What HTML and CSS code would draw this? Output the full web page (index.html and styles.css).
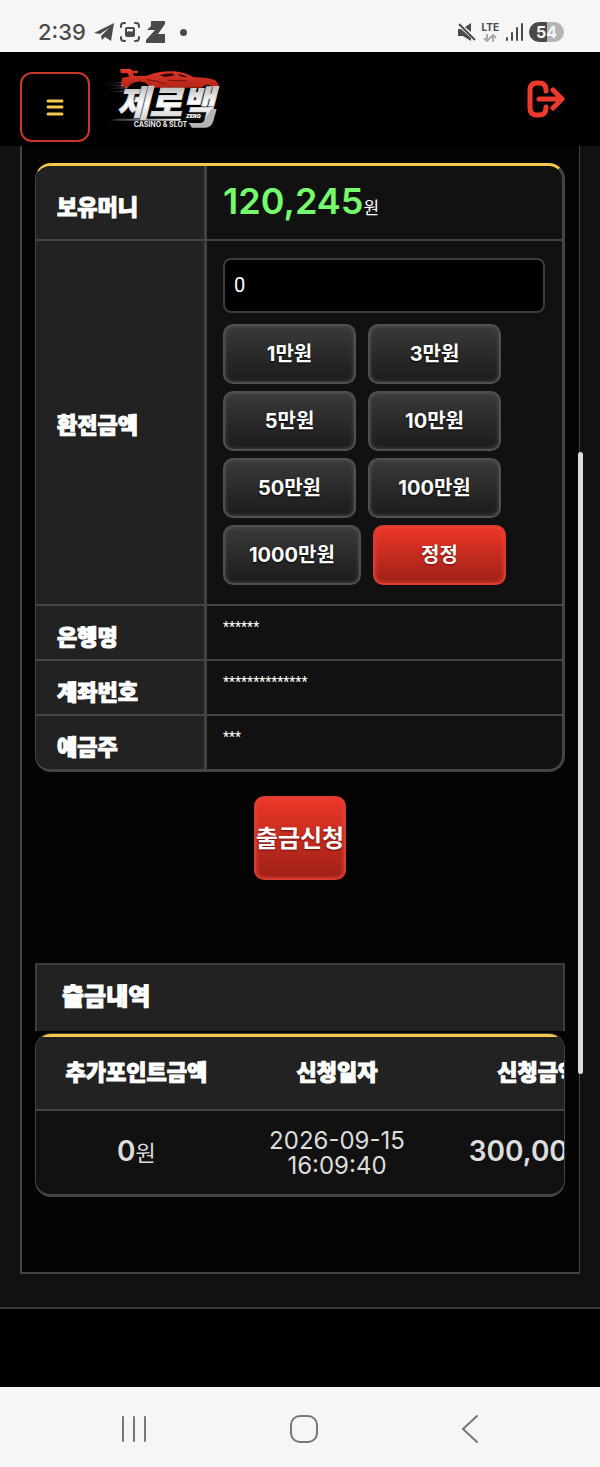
FILE: index.html
```html
<!DOCTYPE html>
<html lang="ko">
<head>
  <meta charset="UTF-8">
  <meta name="viewport" content="width=device-width, initial-scale=1">
  <title>제로백 - 출금신청</title>
  <link rel="stylesheet" href="styles.css">
</head>
<body>

  <div class="status-bar">
    <div class="status-left">
      <span class="clock">2:39</span>
      <svg width="20" height="20" viewBox="0 0 20 20"><path d="M0 11 L20 1 L17 19 L11 15 L8 18 L7 14 L15 6 L6 12 Z" fill="#4a4a4a"/></svg>
      <svg width="20" height="20" viewBox="0 0 20 20" fill="none" stroke="#4a4a4a" stroke-width="2" stroke-linecap="round"><path d="M1 5V4a3 3 0 0 1 3-3h1M15 1h1a3 3 0 0 1 3 3v1M19 15v1a3 3 0 0 1-3 3h-1M5 19H4a3 3 0 0 1-3-3v-1"/><rect x="6" y="6" width="8" height="8" rx="1"/><path d="M7 13v-2l2-1 2 1 2-1v3z" fill="#4a4a4a"/></svg>
      <svg width="20" height="22" viewBox="0 0 20 22"><path d="M5 0H19V3L12 13H19V22H0V19L9 9H1L5 5Z" fill="#4a4a4a"/></svg>
      <span class="dot"></span>
    </div>
    <div class="status-right">
      <svg width="18" height="18" viewBox="0 0 18 18"><path d="M0 6H3L13 15V18L5 13H0ZM7 4L13 0V9Z" fill="#4a4a4a"/><path d="M1 1L17 17" stroke="#4a4a4a" stroke-width="2"/></svg>
      <span class="lte">LTE
        <svg width="14" height="8" viewBox="0 0 14 8" fill="none" stroke="#aaa" stroke-width="2"><path d="M4 0v7M1 4l3 3 3-3M10 8V1M7 4l3-3 3 3"/></svg>
      </span>
      <svg width="18" height="20" viewBox="0 0 18 20" stroke="#4a4a4a" stroke-width="2" stroke-linecap="round"><path d="M2 16v2M7 11v7M12 6v12M17 2v16"/></svg>
      <span class="battery">54</span>
    </div>
  </div>

  <header class="top-bar">
    <button class="menu-btn" aria-label="메뉴">
      <svg width="18" height="17" viewBox="0 0 18 17" stroke="#f2c94c" stroke-width="3" stroke-linecap="round"><path d="M2 2H16M2 8H16M2 15H16"/></svg>
    </button>
    <a href="#" class="logo" aria-label="제로백">
      <svg width="130" height="80" viewBox="0 0 390 240">
        <defs>
          <linearGradient id="silver" x1="0" y1="0" x2="0" y2="1">
            <stop offset="0" stop-color="#a8a8a8"/>
            <stop offset="0.5" stop-color="#ffffff"/>
            <stop offset="1" stop-color="#c4c4c4"/>
          </linearGradient>
          <linearGradient id="streak" x1="0" y1="0" x2="1" y2="0">
            <stop offset="0" stop-color="#fff" stop-opacity="0"/>
            <stop offset="1" stop-color="#fff"/>
          </linearGradient>
          <linearGradient id="car" x1="0" y1="0" x2="0" y2="1">
            <stop offset="0" stop-color="#e43a2b"/>
            <stop offset="1" stop-color="#b32417"/>
          </linearGradient>
        </defs>
        <path d="M60 30L92 29L96 35L114 35L113 43L98 43L103 51L140 50Q178 36 218 37Q252 38 282 55Q322 54 346 64L357 78L350 86L336 86Q327 68 304 86L150 86Q138 64 112 68Q92 71 84 86L63 82L66 57L88 52L83 43L63 43Z" fill="url(#car)"/>
        <path d="M178 49Q196 43 216 43L224 49L196 54ZM232 44Q250 46 264 54L244 53Z" fill="#2b0805"/>
        <path d="M140 62L176 68L200 76M206 64L262 66" fill="none" stroke="#6e140d" stroke-width="3"/>
        <path d="M14 74L66 69V73ZM0 80L68 78V82ZM20 88L82 84V89ZM30 98L76 94V98ZM22 184L54 179H244L240 185H50Z" fill="url(#streak)"/>
        <text x="50" y="170" class="logo-name" fill="url(#silver)">제로백</text>
        <path d="M334 150H350L340 186Q334 206 316 206H276L266 192H298Q310 192 314 182Z" fill="#b4b4b4"/>
        <path d="M257 163H316L309 182H250Z" fill="#151515"/>
        <text x="258" y="178" class="logo-zero">ZERO</text>
        <text x="101" y="205" class="logo-sub">CASINO &amp; SLOT</text>
      </svg>
    </a>
    <a href="#" class="logout" aria-label="로그아웃">
      <svg width="38" height="38" viewBox="0 0 38 38" fill="none" stroke="#ee3a2d" stroke-width="5" stroke-linecap="round" stroke-linejoin="round"><path d="M19 11V10Q19 3 12 3H10Q3 3 3 10V28Q3 35 10 35H12Q19 35 19 28V27M12 19H34M26 10L35 19L26 28"/></svg>
    </a>
  </header>

  <main class="page">
    <div class="panel">

      <form>
        <div class="box money-box">
          <table class="money-table">
            <tr class="balance-row">
              <th>보유머니</th>
              <td><span class="balance">120,245</span><span class="won">원</span></td>
            </tr>
            <tr class="amount-row">
              <th><label for="amount">환전금액</label></th>
              <td>
                <input type="text" id="amount" value="0">
                <div class="amount-btns">
                  <button type="button" class="btn">1만원</button>
                  <button type="button" class="btn">3만원</button>
                  <button type="button" class="btn">5만원</button>
                  <button type="button" class="btn">10만원</button>
                  <button type="button" class="btn">50만원</button>
                  <button type="button" class="btn">100만원</button>
                  <button type="button" class="btn">1000만원</button>
                  <button type="button" class="btn red">정정</button>
                </div>
              </td>
            </tr>
            <tr class="info-row"><th>은행명</th><td>******</td></tr>
            <tr class="info-row"><th>계좌번호</th><td>**************</td></tr>
            <tr class="info-row"><th>예금주</th><td>***</td></tr>
          </table>
        </div>

        <button type="button" class="btn red submit">출금신청</button>
      </form>

      <h2>출금내역</h2>
      <div class="box history-box">
        <table class="history-table">
          <thead>
            <tr><th>추가포인트금액</th><th>신청일자</th><th>신청금액</th></tr>
          </thead>
          <tbody>
            <tr>
              <td><b>0</b>원</td>
              <td class="date">2026-09-15<br>16:09:40</td>
              <td><b>300,000</b>원</td>
            </tr>
          </tbody>
        </table>
      </div>

    </div>
    <span class="scroll-thumb"></span>
  </main>

  <footer class="footer"></footer>

  <nav class="phone-nav">
    <button aria-label="최근 앱"><svg width="26" height="28" viewBox="0 0 26 28" stroke="#777" stroke-width="2" stroke-linecap="round"><path d="M2 2V26M13 2V26M24 2V26"/></svg></button>
    <button aria-label="홈"><svg width="28" height="28" viewBox="0 0 28 28" fill="none" stroke="#777" stroke-width="2"><rect x="1" y="1" width="26" height="26" rx="9"/></svg></button>
    <button aria-label="뒤로"><svg width="18" height="28" viewBox="0 0 18 28" fill="none" stroke="#777" stroke-width="2" stroke-linecap="round" stroke-linejoin="round"><path d="M16 1L2 14L16 27"/></svg></button>
  </nav>

</body>
</html>
```
FILE: styles.css
```css
* {
  box-sizing: border-box;
}

body {
  margin: 0;
  background: #000;
  color: #fff;
  font-family: Inter, "Noto Sans CJK KR", sans-serif;
}

svg {
  display: block;
}

button {
  font-family: inherit;
  cursor: pointer;
}

/* phone status bar */
.status-bar {
  display: flex;
  justify-content: space-between;
  align-items: center;
  height: 52px;
  padding: 12px 36px 0 38px;
  background: #f6f6f6;
  color: #4a4a4a;
}

.status-left,
.status-right {
  display: flex;
  align-items: center;
  gap: 6px;
}

.clock {
  margin-right: 2px;
  font-size: 22px;
  font-weight: 500;
}

.dot {
  width: 7px;
  height: 7px;
  margin-left: 8px;
  border-radius: 50%;
  background: #4a4a4a;
}

.lte {
  display: flex;
  flex-direction: column;
  align-items: center;
  gap: 2px;
  font-size: 10px;
  line-height: 10px;
  font-weight: 700;
}

.battery {
  width: 35px;
  border-radius: 10px;
  background: linear-gradient(90deg, #4a4a4a 52%, #b4b4b4 52%);
  color: #f6f6f6;
  font-size: 16px;
  line-height: 20px;
  font-weight: 700;
  text-align: center;
}

/* site header */
.top-bar {
  display: flex;
  align-items: center;
  height: 94px;
  padding: 0 35px 0 20px;
  background: #000;
}

.menu-btn {
  display: flex;
  align-items: center;
  justify-content: center;
  width: 70px;
  height: 70px;
  margin-top: 16px;
  padding: 0;
  border: 2px solid #c9372c;
  border-radius: 12px;
  background: #000;
}

.logo {
  margin-left: 10px;
}

.logo-name {
  font-size: 106px;
  font-weight: 900;
  font-style: italic;
  stroke: #ddd;
  stroke-width: 2px;
}

.logo-zero {
  fill: #fff;
  font-size: 16px;
  font-weight: 900;
  font-style: italic;
}

.logo-sub {
  fill: #e6e6e6;
  font-size: 21px;
  font-weight: 700;
}

.logout {
  margin-left: auto;
}

/* main page */
.page {
  position: relative;
  padding: 0 20px 33px;
  border-bottom: 2px solid #3c3c3c;
  background: #111;
}

.panel {
  padding: 17px 14px 75px 13px;
  border: 1px solid #444;
  border-width: 0 1px 2px 2px;
  background: #040404;
}

.scroll-thumb {
  position: absolute;
  top: 306px;
  right: 17px;
  width: 5px;
  height: 622px;
  border-radius: 3px;
  background: #dcdcdc;
}

.box {
  overflow: hidden;
  border: 1px solid #444;
  border-bottom-width: 3px;
  border-radius: 16px;
  background: #111;
}

table {
  border-spacing: 0;
  table-layout: fixed;
}

th,
td {
  padding: 0;
}

th,
h2 {
  font-weight: 900;
  -webkit-text-stroke: 1px #fff;
}

.money-box {
  border-top: 3px solid #f2c94c;
  border-right-width: 3px;
}

.money-table {
  width: 100%;
}

.money-table th {
  width: 171px;
  padding-left: 21px;
  border-right: 3px solid #42423e;
  background: #222;
  font-size: 22px;
  text-align: left;
}

.money-table td {
  padding: 0 17px 0 16px;
}

.money-table tr + tr th,
.money-table tr + tr td {
  border-top: 2px solid #444;
}

.balance-row {
  height: 73px;
}

.balance-row th {
  padding-top: 4px;
}

.balance-row td {
  padding-bottom: 4px;
}

.balance {
  color: #76fb6c;
  font-size: 36px;
  font-weight: 600;
}

.won {
  font-size: 17px;
}

.money-table .amount-row td {
  padding: 17px 17px 19px 16px;
}

#amount {
  display: block;
  width: 100%;
  height: 55px;
  padding: 0 9px 2px;
  border: 2px solid #3c3c3c;
  border-radius: 8px;
  background: #000;
  color: #fff;
  font-family: Roboto, sans-serif;
  font-size: 20px;
}

.amount-btns {
  display: flex;
  flex-wrap: wrap;
  gap: 7px 12px;
  margin-top: 11px;
}

.btn {
  min-width: 133px;
  height: 60px;
  padding: 0 24px 4px;
  border: 2px solid #505050;
  border-radius: 10px;
  background: linear-gradient(#3a3a3a, #1b1b1b);
  box-shadow: inset 0 0 4px #555;
  color: #fff;
  font-size: 20px;
  font-weight: 700;
  text-shadow: 0 1px 2px #000;
}

.btn.red {
  border-color: #dc3b30;
  background: linear-gradient(#ec3729, #9e2016);
  box-shadow: inset 0 0 4px #e34a3e;
  text-shadow: 0 1px 2px #6b120b;
}

.info-row {
  height: 55px;
}

.info-row th {
  padding-top: 4px;
}

.money-table .info-row td {
  padding-top: 11px;
  font-family: Roboto, sans-serif;
  font-size: 14px;
  line-height: 20px;
  vertical-align: top;
}

.btn.submit {
  display: block;
  min-width: 92px;
  height: 84px;
  margin: 24px auto 83px;
  padding: 0 0 4px;
  font-size: 24px;
}

/* withdrawal history */
h2 {
  margin: 0 0 2px;
  padding: 0 25px 2px;
  border: 2px solid #3c3c3c;
  border-bottom: 0;
  background: #222;
  font-size: 24px;
  line-height: 64px;
}

.history-table {
  width: 602px;
  border-top: 3px solid #f2c94c;
  text-align: center;
}

.history-table th {
  height: 74px;
  padding-bottom: 6px;
  border-bottom: 2px solid #444;
  background: #222;
  font-size: 22px;
}

.history-table td {
  height: 83px;
  color: #ddd;
  font-size: 22px;
  line-height: 25px;
}

.history-table .date {
  font-size: 24px;
}

.history-table b {
  font-size: 28px;
  font-weight: 600;
}

/* bottom */
.footer {
  height: 78px;
  background: #000;
}

.phone-nav {
  display: flex;
  justify-content: space-around;
  align-items: center;
  height: 80px;
  padding: 4px 50px 0;
  background: #f6f6f6;
}

.phone-nav button {
  padding: 0;
  border: 0;
  background: none;
}
```
